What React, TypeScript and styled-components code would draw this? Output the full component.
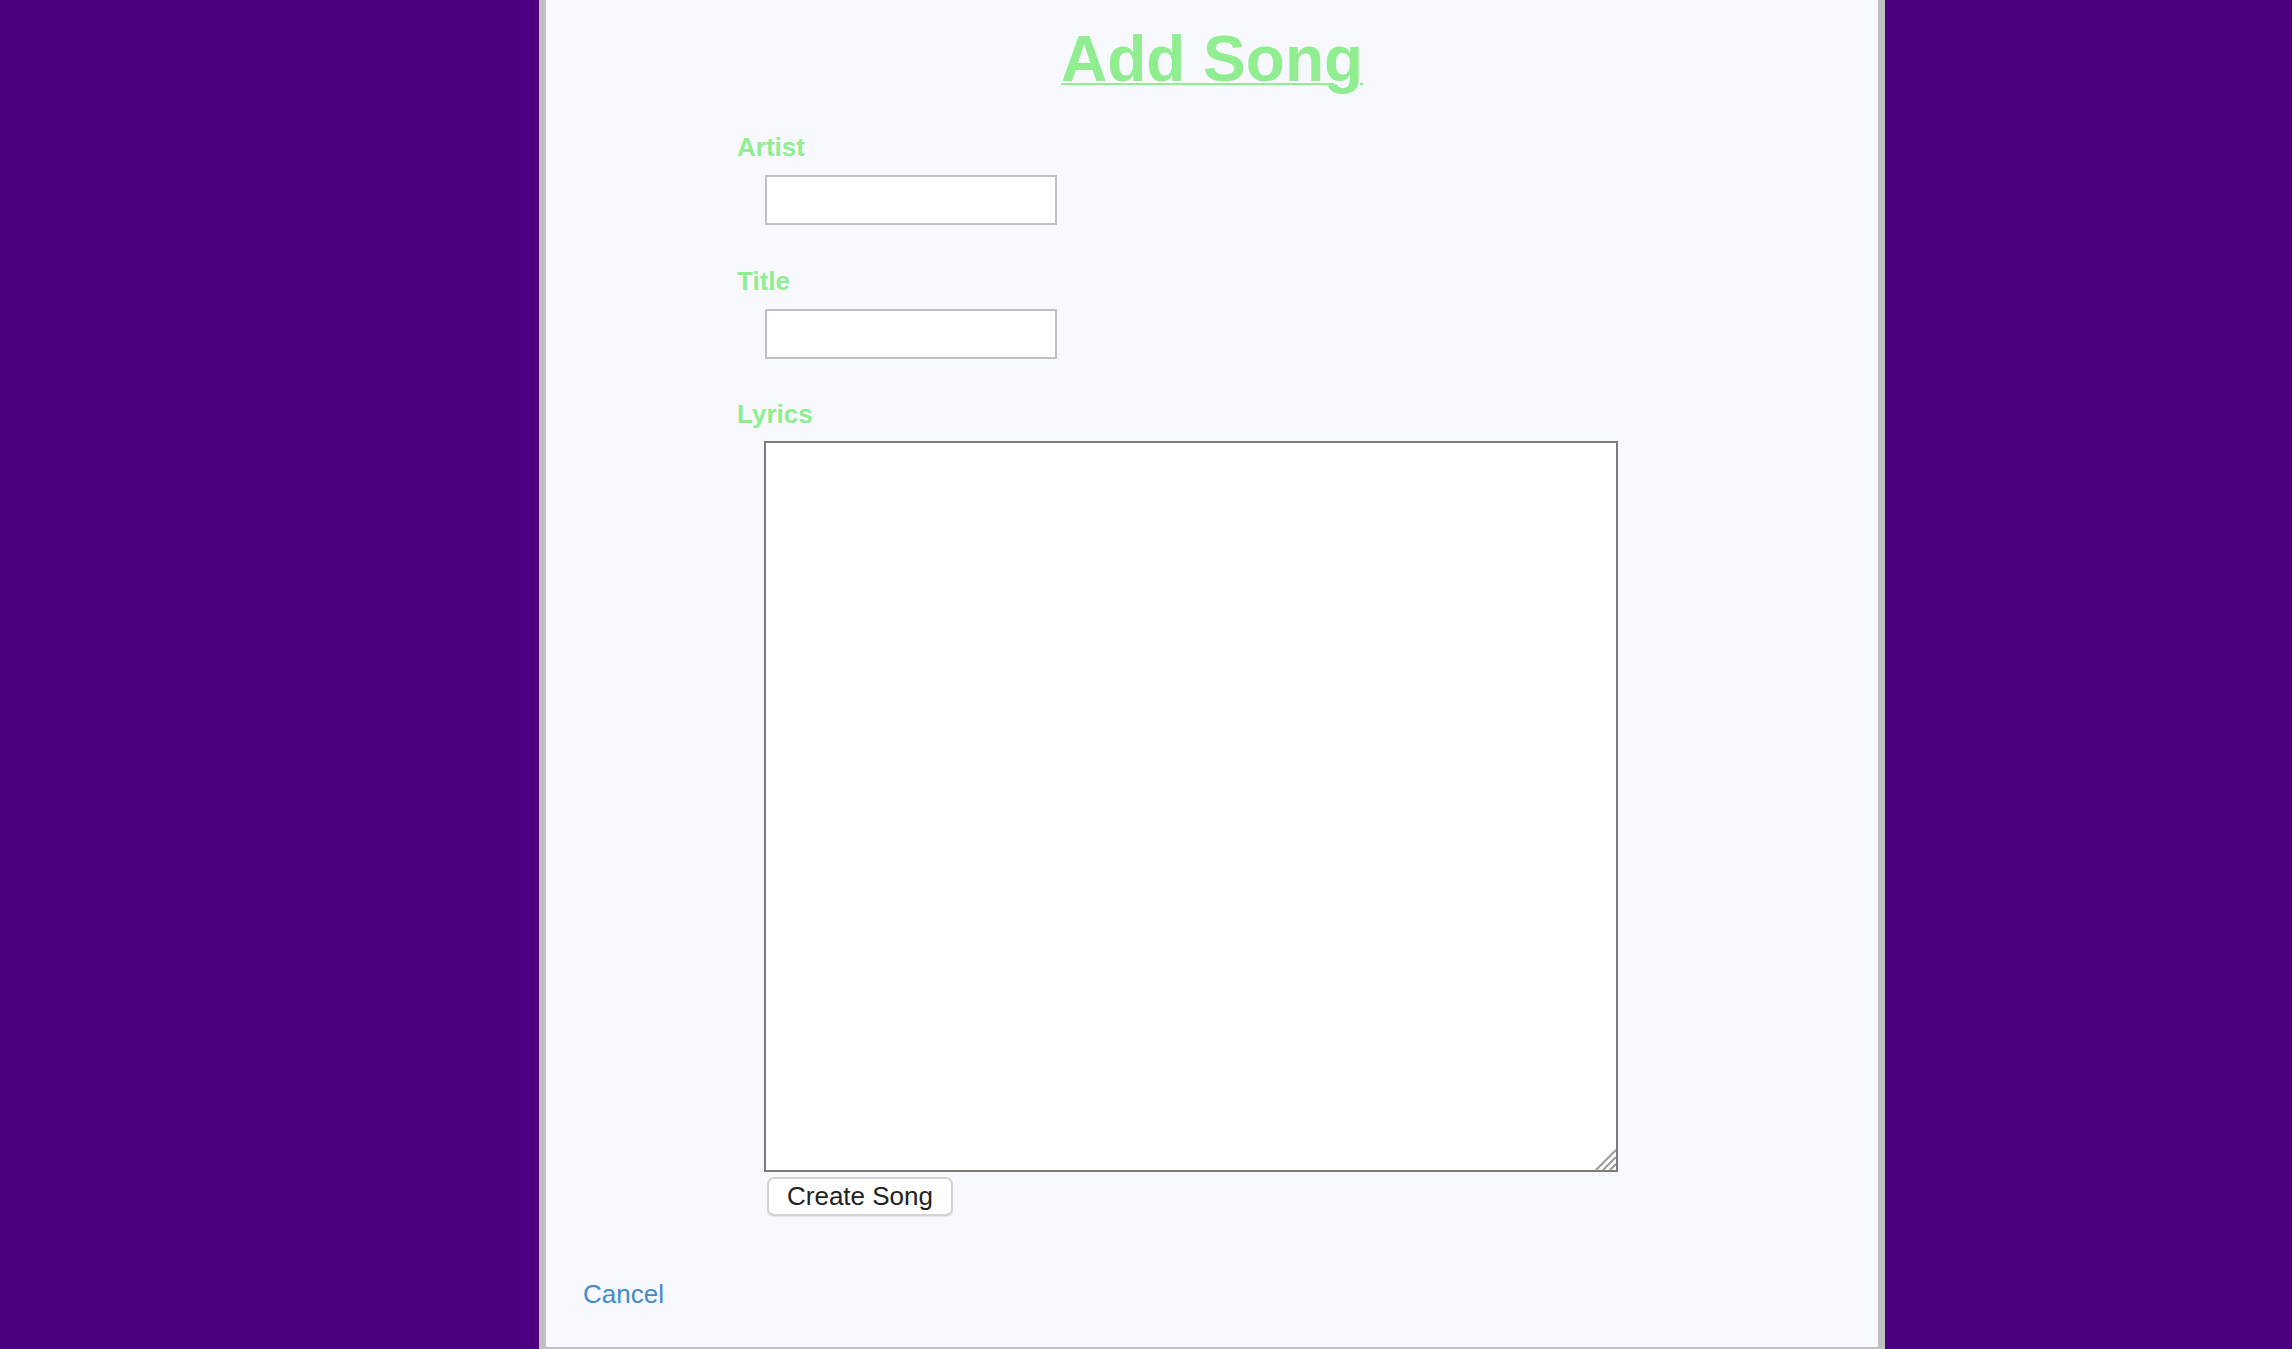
import styled, { createGlobalStyle } from "styled-components";

const GlobalStyle = createGlobalStyle`
  html, body {
    margin: 0;
    padding: 0;
    overflow: hidden;
    background-color: #4b0082;
    font-family: "Liberation Sans", Arial, sans-serif;
  }
`;

const Page = styled.div`
  display: flex;
  padding-left: 539px;
  min-height: 100vh;
`;

const Panel = styled.div`
  width: 1332px;
  height: 1347px;
  background-color: #f8f8ff;
  border: 7px solid #c0c0c0;
  border-top: 0;
  display: flex;
  flex-direction: column;
`;

const Heading = styled.h1`
  margin: 27px 0 0;
  font-size: 64px;
  line-height: 64px;
  font-weight: bold;
  text-align: center;

  a {
    color: #90ee90;
    text-decoration: underline;
    text-decoration-thickness: 2px;
    text-underline-offset: 2px;
  }
`;

const Form = styled.form`
  display: flex;
  flex-direction: column;
  align-items: flex-start;
  margin-top: 43px;
  padding-left: 191px;
`;

const Label = styled.label`
  font-size: 26px;
  line-height: 26px;
  font-weight: bold;
  color: #90ee90;
`;

const TextInput = styled.input<{ $last?: boolean }>`
  box-sizing: border-box;
  width: 292px;
  height: 50px;
  margin: 15px 0 ${({ $last }) => ($last ? "42px" : "43px")} 28px;
  border: 2px solid #c0c0c0;
  background: #fff;
  font-size: 24px;
  font-family: inherit;
  outline: none;
`;

const LyricsWrap = styled.div`
  position: relative;
  margin: 14px 0 0 27px;
  width: 854px;
  height: 731px;
`;

const LyricsBox = styled.textarea`
  box-sizing: border-box;
  display: block;
  width: 100%;
  height: 100%;
  margin: 0;
  border: 2px solid #7b7b7b;
  background: #fff;
  font-size: 24px;
  font-family: inherit;
  outline: none;
  resize: none;
`;

const Grip = styled.svg`
  position: absolute;
  right: 2px;
  bottom: 2px;
  width: 22px;
  height: 22px;
  pointer-events: none;
`;

const SubmitButton = styled.button`
  box-sizing: border-box;
  width: 186px;
  height: 39px;
  margin: 5px 0 0 30px;
  padding: 0;
  background: #fff;
  border: 2px solid #d4d4d4;
  border-radius: 7px;
  box-shadow: 0 1px 1px rgba(0, 0, 0, 0.08);
  color: #222;
  font-family: "Liberation Sans", Arial, sans-serif;
  font-size: 26px;
  line-height: 35px;
`;

const CancelLink = styled.a`
  align-self: flex-start;
  margin: 65px 0 0 37px;
  font-size: 26px;
  line-height: 26px;
  color: #428bca;
  text-decoration: none;
`;

const Field = ({ label, last }: { label: string; last?: boolean }) => (
  <>
    <Label>{label}</Label>
    <TextInput type="text" $last={last} />
  </>
);

const App = () => {
  return (
    <Page>
      <GlobalStyle />
      <Panel>
        <Heading>
          <a href="#">Add Song</a>
        </Heading>
        <Form onSubmit={(e) => e.preventDefault()}>
          <Field label="Artist" />
          <Field label="Title" last />
          <Label>Lyrics</Label>
          <LyricsWrap>
            <LyricsBox />
            <Grip viewBox="0 0 22 22">
              <g stroke="#9a9a9a" strokeWidth="2">
                <line x1="22" y1="2" x2="2" y2="22" />
                <line x1="22" y1="9" x2="9" y2="22" />
                <line x1="22" y1="16" x2="16" y2="22" />
              </g>
            </Grip>
          </LyricsWrap>
          <SubmitButton type="submit">Create Song</SubmitButton>
        </Form>
        <CancelLink href="#">Cancel</CancelLink>
      </Panel>
    </Page>
  );
};

export default App;
